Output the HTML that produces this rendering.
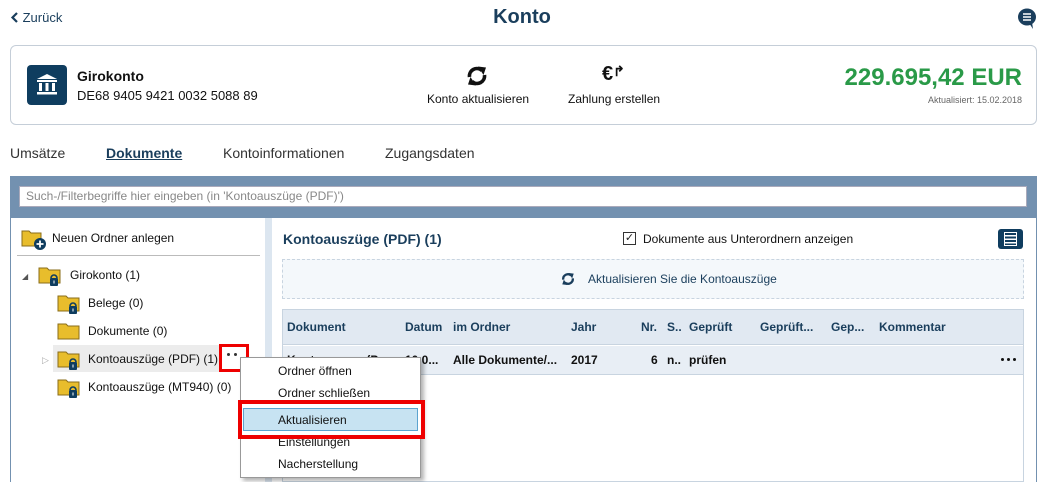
<!DOCTYPE html>
<html><head><meta charset="utf-8"><style>
*{box-sizing:border-box;margin:0;padding:0}
body{width:1044px;height:482px;overflow:hidden;background:#fff;font-family:"Liberation Sans",Arial,sans-serif;color:#222;position:relative;font-size:13px}
.a{position:absolute;white-space:nowrap}
.dk{color:#1a3e5c}
.th{font-weight:bold;color:#1a3e5c;font-size:12px}
.td{font-weight:bold;color:#111;font-size:12px}
</style></head><body>
<div class="a dk" style="left:10px;top:10px;font-size:13px"><svg width="9" height="11" viewBox="0 0 9 11" style="vertical-align:-1px"><path d="M7 1L2.5 5.5L7 10" stroke="#1a3e5c" stroke-width="2.2" fill="none"/></svg> Zurück</div>
<div class="a dk" style="left:0;width:1044px;text-align:center;top:6px;font-size:20px;font-weight:bold">Konto</div>
<svg class="a" style="left:1017px;top:8px" width="20" height="22" viewBox="0 0 20 22"><ellipse cx="10" cy="9" rx="9" ry="8.5" fill="#1a3e5c"/><path d="M12 15l4 6l-1-7z" fill="#1a3e5c"/><path d="M6 6h8M6 9h8M6 12h8" stroke="#fff" stroke-width="1.5"/></svg>

<div class="a" style="left:10px;top:45px;width:1027px;height:80px;border:1px solid #c5ced8;border-radius:6px"></div>
<div class="a" style="left:27px;top:65px;width:40px;height:40px;background:#0f3d5f;border-radius:4px"></div>
<svg class="a" style="left:33px;top:71px" width="28" height="28" viewBox="0 0 28 28"><path d="M14 3L4 8h20z" fill="#fff"/><rect x="4" y="9" width="20" height="2" fill="#fff"/><rect x="6" y="12" width="3" height="8" fill="#fff"/><rect x="12.5" y="12" width="3" height="8" fill="#fff"/><rect x="19" y="12" width="3" height="8" fill="#fff"/><rect x="4" y="21" width="20" height="2.5" fill="#fff"/></svg>
<div class="a" style="left:77px;top:68px;font-size:14px;font-weight:bold;color:#111">Girokonto</div>
<div class="a" style="left:77px;top:88px;font-size:13px;color:#111">DE68 9405 9421 0032 5088 89</div>
<svg class="a" style="left:466px;top:66px" width="22" height="20" viewBox="0 0 22 20"><path d="M3.5 11A7.5 7.5 0 0 1 16 4.5" stroke="#111" stroke-width="3.6" fill="none"/><path d="M12 0.5l8 1l-2.5 7.5z" fill="#111"/><path d="M18.5 9A7.5 7.5 0 0 1 6 15.5" stroke="#111" stroke-width="3.6" fill="none"/><path d="M10 19.5l-8-1l2.5-7.5z" fill="#111"/></svg>
<div class="a" style="left:427px;top:92px;font-size:12px;color:#111">Konto aktualisieren</div>
<div class="a" style="left:602px;top:63px;font-size:20px;color:#111;font-weight:bold">€<span style="font-size:14px;position:relative;top:-4px">↱</span></div>
<div class="a" style="left:568px;top:92px;font-size:12px;color:#111">Zahlung erstellen</div>
<div class="a" style="right:22px;top:64px;font-size:24px;font-weight:bold;color:#2a9a48">229.695,42 EUR</div>
<div class="a" style="right:22px;top:95px;font-size:9px;color:#666">Aktualisiert: 15.02.2018</div>

<div class="a" style="left:10px;top:145px;font-size:14px;color:#333">Umsätze</div>
<div class="a dk" style="left:106px;top:145px;font-size:14px;font-weight:bold;text-decoration:underline">Dokumente</div>
<div class="a" style="left:223px;top:145px;font-size:14px;color:#333">Kontoinformationen</div>
<div class="a" style="left:385px;top:145px;font-size:14px;color:#333">Zugangsdaten</div>

<div class="a" style="left:10px;top:176px;width:1027px;height:306px;background:#7391b0"></div>
<div class="a" style="left:19px;top:186px;width:1008px;height:21px;background:#fff;border:1px solid #aab;font-size:12px;color:#888;padding:2px 6px">Such-/Filterbegriffe hier eingeben (in 'Kontoauszüge (PDF)')</div>
<div class="a" style="left:11px;top:218px;width:1025px;height:264px;background:#dce6f0"></div>
<div class="a" style="left:11px;top:218px;width:254px;height:264px;background:#fff"></div>
<div class="a" style="left:272px;top:218px;width:764px;height:264px;background:#fff"></div>

<svg class="a" style="left:21px;top:228px" width="26" height="22" viewBox="0 0 26 22"><path d="M1 3h7l2 2h10v13H1z" fill="#e8bd2c" stroke="#8a6d1a"/><circle cx="19" cy="16" r="6" fill="#0f3d5f"/><path d="M19 12.5v7M15.5 16h7" stroke="#fff" stroke-width="1.8"/></svg>
<div class="a" style="left:52px;top:231px;font-size:12px;color:#111">Neuen Ordner anlegen</div>
<div class="a" style="left:17px;top:255px;width:243px;height:1px;background:#bbb"></div>

<div class="a" style="left:22px;top:272px;font-size:8px;color:#555">◢</div>
<div class="a" style="left:53px;top:345px;width:166px;height:27px;background:#ececec"></div>
<div class="a" style="left:42px;top:355px;font-size:9px;color:#aaa">▷</div>
<svg width="0" height="0" style="position:absolute"><defs><g id="f"><path d="M1 3h8l2 2h11v13H1z" fill="#e8bd2c" stroke="#8a6d1a"/><path d="M13 13a3 3 0 0 1 6 0" stroke="#0f3d5f" stroke-width="1.6" fill="none"/><rect x="12" y="13" width="8" height="8" rx="1" fill="#0f3d5f"/><rect x="15.5" y="15.5" width="1" height="3" fill="#fff"/></g></defs></svg>
<svg class="a" style="left:38px;top:265px" width="26" height="22"><use href="#f"/></svg>
<div class="a" style="left:70px;top:268px;font-size:12px;color:#111">Girokonto (1)</div>
<svg class="a" style="left:57px;top:293px" width="26" height="22"><use href="#f"/></svg>
<div class="a" style="left:88px;top:296px;font-size:12px;color:#111">Belege (0)</div>
<svg class="a" style="left:57px;top:321px" width="26" height="22"><path d="M1 3h8l2 2h11v13H1z" fill="#e8bd2c" stroke="#8a6d1a"/></svg>
<div class="a" style="left:88px;top:324px;font-size:12px;color:#111">Dokumente (0)</div>
<svg class="a" style="left:57px;top:349px" width="26" height="22"><use href="#f"/></svg>
<div class="a" style="left:88px;top:352px;font-size:12px;color:#111">Kontoauszüge (PDF) (1)</div>
<div class="a" style="left:219px;top:344px;width:30px;height:28px;border:3px solid #e00"></div>
<div class="a" style="left:227px;top:353px;width:3px;height:3px;background:#333;border-radius:50%"></div>
<div class="a" style="left:234px;top:353px;width:3px;height:3px;background:#333;border-radius:50%"></div>
<svg class="a" style="left:57px;top:377px" width="26" height="22"><use href="#f"/></svg>
<div class="a" style="left:88px;top:380px;font-size:12px;color:#111">Kontoauszüge (MT940) (0)</div>

<div class="a dk" style="left:283px;top:231px;font-size:14px;font-weight:bold">Kontoauszüge (PDF) (1)</div>
<div class="a" style="left:623px;top:232px;width:13px;height:13px;border:1px solid #333;font-size:11px;line-height:11px;text-align:center">✓</div>
<div class="a" style="left:643px;top:232px;font-size:12px;color:#111">Dokumente aus Unterordnern anzeigen</div>
<div class="a" style="left:998px;top:229px;width:25px;height:20px;background:#0f3d5f;border-radius:3px"></div>
<div class="a" style="left:1004px;top:232px;width:13px;height:14px;border:1.5px solid #fff;background:repeating-linear-gradient(#0f3d5f 0 2px,#fff 2px 3.5px)"></div>
<div class="a" style="left:282px;top:259px;width:742px;height:40px;border:1px dashed #c8d4e0;background:#f4f8fb"></div>
<svg class="a" style="left:561px;top:272px" width="14" height="14" viewBox="0 0 22 20"><path d="M3.5 11A7.5 7.5 0 0 1 16 4.5" stroke="#1a3e5c" stroke-width="3.6" fill="none"/><path d="M12 0.5l8 1l-2.5 7.5z" fill="#1a3e5c"/><path d="M18.5 9A7.5 7.5 0 0 1 6 15.5" stroke="#1a3e5c" stroke-width="3.6" fill="none"/><path d="M10 19.5l-8-1l2.5-7.5z" fill="#1a3e5c"/></svg>
<div class="a dk" style="left:588px;top:272px;font-size:12px">Aktualisieren Sie die Kontoauszüge</div>

<div class="a" style="left:282px;top:309px;width:742px;height:173px;border:1px solid #c8d4e0"></div>
<div class="a" style="left:283px;top:310px;width:740px;height:35px;background:#e1e9f2;border-bottom:1px solid #c8d4e0"></div>
<div class="a" style="left:283px;top:346px;width:740px;height:29px;background:#e8eef5;border-bottom:1px solid #c8d4e0"></div>
<div class="a th" style="left:287px;top:320px">Dokument</div>
<div class="a th" style="left:405px;top:320px">Datum</div>
<div class="a th" style="left:453px;top:320px">im Ordner</div>
<div class="a th" style="left:571px;top:320px">Jahr</div>
<div class="a th" style="left:641px;top:320px">Nr.</div>
<div class="a th" style="left:667px;top:320px">S..</div>
<div class="a th" style="left:689px;top:320px">Geprüft</div>
<div class="a th" style="left:760px;top:320px">Geprüft...</div>
<div class="a th" style="left:831px;top:320px">Gep...</div>
<div class="a th" style="left:879px;top:320px">Kommentar</div>
<div class="a td" style="left:287px;top:353px">Kontoauszug (P...</div>
<div class="a td" style="left:405px;top:353px">10.0...</div>
<div class="a td" style="left:453px;top:353px">Alle Dokumente/...</div>
<div class="a td" style="left:571px;top:353px">2017</div>
<div class="a td" style="left:651px;top:353px">6</div>
<div class="a td" style="left:667px;top:353px">n..</div>
<div class="a td" style="left:689px;top:353px">prüfen</div>
<div class="a" style="left:1001px;top:358px;width:3px;height:3px;background:#111;border-radius:50%;box-shadow:6px 0 #111,12px 0 #111"></div>

<div class="a" style="left:240px;top:357px;width:181px;height:121px;background:#fff;border:1px solid #999;box-shadow:3px 3px 4px rgba(0,0,0,.3)"></div>
<div class="a" style="left:278px;top:364px;font-size:12px;color:#111">Ordner öffnen</div>
<div class="a" style="left:278px;top:386px;font-size:12px;color:#111">Ordner schließen</div>
<div class="a" style="left:278px;top:435px;font-size:12px;color:#111">Einstellungen</div>
<div class="a" style="left:278px;top:457px;font-size:12px;color:#111">Nacherstellung</div>
<div class="a" style="left:238px;top:400px;width:187px;height:39px;border:4px solid #e00;background:#fff"></div>
<div class="a" style="left:243px;top:408px;width:175px;height:23px;background:#c7e3f2;border:1px solid #5ba3cf"></div>
<div class="a" style="left:278px;top:413px;font-size:12px;color:#111">Aktualisieren</div>
</body></html>
